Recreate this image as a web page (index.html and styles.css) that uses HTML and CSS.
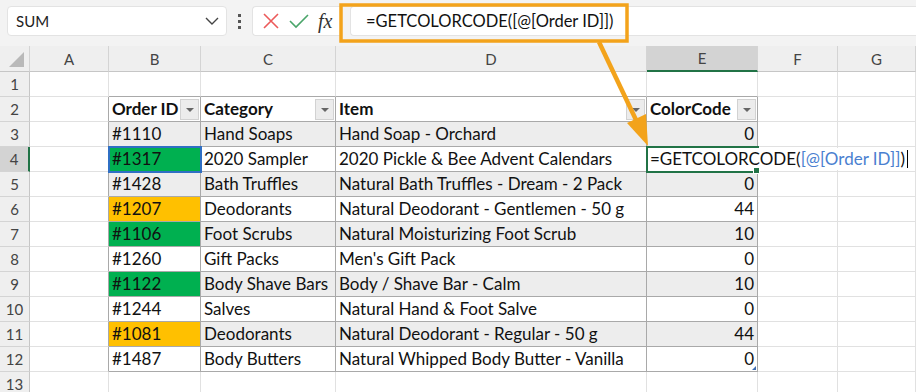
FILE: index.html
```html
<!DOCTYPE html>
<html lang="en">
<head>
  <meta charset="UTF-8">
  <title>GETCOLORCODE</title>
  <link rel="stylesheet" href="styles.css">
</head>
<body>

  <div class="toolbar">
    <div class="namebox">
      <span>SUM</span>
      <svg class="chev" width="14" height="8" viewBox="0 0 14 8"><path d="M1 1 L7 7 L13 1" fill="none" stroke="#444" stroke-width="1.4"/></svg>
    </div>
    <div class="vdots"><i></i><i></i><i></i></div>
    <div class="fxbox">
      <svg width="18" height="18" viewBox="0 0 18 18"><path d="M2 2 L16 16 M16 2 L2 16" stroke="#ec5a5a" stroke-width="1.6" fill="none"/></svg>
      <svg width="20" height="16" viewBox="0 0 20 16"><path d="M1 8 L7 14 L19 2" stroke="#4aa56a" stroke-width="1.6" fill="none"/></svg>
      <span class="fx">fx</span>
    </div>
    <div class="formula">=GETCOLORCODE([@[Order ID]])</div>
  </div>

  <table class="sheet">
    <colgroup>
      <col style="width:30px"><col style="width:79px"><col style="width:92px"><col style="width:135px">
      <col style="width:311px"><col style="width:111px"><col style="width:80px"><col style="width:78px">
    </colgroup>
    <tr class="colhead">
      <th class="corner"><span class="tri"></span></th>
      <th>A</th><th>B</th><th>C</th><th>D</th><th class="sel">E</th><th>F</th><th>G</th>
    </tr>
    <tr class="r1">
      <th class="rh">1</th>
      <td></td><td class="tt"></td><td class="tt"></td><td class="tt"></td><td class="tt"></td><td></td><td></td>
    </tr>
    <tr class="hdr">
      <th class="rh">2</th>
      <td class="tl"></td>
      <td class="t">Order ID<span class="flt"></span></td>
      <td class="t">Category<span class="flt"></span></td>
      <td class="t">Item<span class="flt"></span></td>
      <td class="t">ColorCode<span class="flt"></span></td>
      <td></td><td></td>
    </tr>
    <tr class="band">
      <th class="rh">3</th>
      <td class="tl"></td><td class="t">#1110</td><td class="t">Hand Soaps</td><td class="t">Hand Soap - Orchard</td><td class="t num">0</td><td></td><td></td>
    </tr>
    <tr>
      <th class="rh sel">4</th>
      <td class="tl"></td><td class="t green active">#1317</td><td class="t">2020 Sampler</td><td class="t">2020 Pickle &amp; Bee Advent Calendars</td>
      <td class="t edit"><span class="edittext">=GETCOLORCODE(<b>[@[Order ID]]</b>)<i class="caret"></i></span><span class="handle"></span></td>
      <td></td><td></td>
    </tr>
    <tr class="band">
      <th class="rh">5</th>
      <td class="tl"></td><td class="t">#1428</td><td class="t">Bath Truffles</td><td class="t">Natural Bath Truffles - Dream - 2 Pack</td><td class="t num">0</td><td></td><td></td>
    </tr>
    <tr>
      <th class="rh">6</th>
      <td class="tl"></td><td class="t orange">#1207</td><td class="t">Deodorants</td><td class="t">Natural Deodorant - Gentlemen - 50 g</td><td class="t num">44</td><td></td><td></td>
    </tr>
    <tr class="band">
      <th class="rh">7</th>
      <td class="tl"></td><td class="t green">#1106</td><td class="t">Foot Scrubs</td><td class="t">Natural Moisturizing Foot Scrub</td><td class="t num">10</td><td></td><td></td>
    </tr>
    <tr>
      <th class="rh">8</th>
      <td class="tl"></td><td class="t">#1260</td><td class="t">Gift Packs</td><td class="t">Men's Gift Pack</td><td class="t num">0</td><td></td><td></td>
    </tr>
    <tr class="band">
      <th class="rh">9</th>
      <td class="tl"></td><td class="t green">#1122</td><td class="t">Body Shave Bars</td><td class="t">Body / Shave Bar - Calm</td><td class="t num">10</td><td></td><td></td>
    </tr>
    <tr>
      <th class="rh">10</th>
      <td class="tl"></td><td class="t">#1244</td><td class="t">Salves</td><td class="t">Natural Hand &amp; Foot Salve</td><td class="t num">0</td><td></td><td></td>
    </tr>
    <tr class="band">
      <th class="rh">11</th>
      <td class="tl"></td><td class="t orange">#1081</td><td class="t">Deodorants</td><td class="t">Natural Deodorant - Regular - 50 g</td><td class="t num">44</td><td></td><td></td>
    </tr>
    <tr>
      <th class="rh">12</th>
      <td class="tl"></td><td class="t">#1487</td><td class="t">Body Butters</td><td class="t">Natural Whipped Body Butter - Vanilla</td><td class="t num last">0<span class="resize"></span></td><td></td><td></td>
    </tr>
    <tr>
      <th class="rh">13</th>
      <td></td><td></td><td></td><td></td><td></td><td></td><td></td>
    </tr>
  </table>

  <!-- annotation: orange box round the formula and arrow to E4 -->
  <svg class="callout" width="916" height="392" viewBox="0 0 916 392">
    <rect x="341" y="5" width="286" height="36" fill="none" stroke="#f3a31b" stroke-width="3.5"/>
    <line x1="599" y1="42" x2="637" y2="122" stroke="#f3a31b" stroke-width="4.5"/>
    <polygon points="648,146 627,123 646,114" fill="#f3a31b"/>
  </svg>

</body>
</html>
```

FILE: styles.css
```css
body {
  margin: 0;
  background-color: #ffffff;
  font-family: Lato, "Open Sans", sans-serif;
  overflow: hidden;
}

/* formula bar */
.toolbar {
  display: flex;
  align-items: flex-start;
  height: 46px;
  box-sizing: border-box;
  padding: 6px 0 0 7px;
  background-color: #f3f3f3;
}

.namebox {
  display: flex;
  align-items: center;
  justify-content: space-between;
  width: 220px;
  height: 30px;
  box-sizing: border-box;
  padding: 0 7px 0 8px;
  background-color: #ffffff;
  border: 1px solid #e3e3e3;
  border-radius: 4px;
  font-size: 15px;
  color: #222;
}

.vdots {
  width: 25px;
  height: 30px;
  display: flex;
  flex-direction: column;
  align-items: center;
  justify-content: center;
  gap: 3px;
}

.vdots i {
  display: block;
  width: 3px;
  height: 3px;
  background-color: #555;
}

.fxbox {
  display: flex;
  align-items: center;
  gap: 9px;
  width: 88px;
  height: 30px;
  box-sizing: border-box;
  padding-left: 9px;
  background-color: #ffffff;
  border: 1px solid #e3e3e3;
  border-right: none;
  border-radius: 4px 0 0 4px;
}

.fx {
  font-family: "Liberation Serif", serif;
  font-style: italic;
  font-size: 20px;
  color: #333;
}

.formula {
  flex: 1;
  margin-left: 10px;
  height: 30px;
  box-sizing: border-box;
  padding-left: 15px;
  line-height: 28px;
  background-color: #ffffff;
  border: 1px solid #e3e3e3;
  border-right: none;
  border-radius: 4px 0 0 4px;
  font-size: 16.5px;
  color: #111;
}

/* grid */
.sheet {
  table-layout: fixed;
  width: 916px;
  border-collapse: separate;
  border-spacing: 0;
  font-size: 17px;
  color: #111;
}

.sheet th,
.sheet td {
  height: 24px;
  padding: 0 3px;
  border-right: 1px solid #e1e1e1;
  border-bottom: 1px solid #e1e1e1;
  white-space: nowrap;
  overflow: visible;
  line-height: 24px;
  text-align: left;
}

.colhead th {
  background-color: #efefef;
  border-right-color: #d4d4d4;
  border-bottom-color: #c6c6c6;
  text-align: center;
  font-weight: normal;
  font-size: 15px;
  color: #444;
}

.colhead th.sel {
  background-color: #d3d3d3;
  border-bottom: 2px solid #217346;
  height: 23px;
}

.corner {
  position: relative;
}

.tri {
  position: absolute;
  right: 5px;
  bottom: 4px;
  width: 0;
  height: 0;
  border-left: 15px solid transparent;
  border-bottom: 15px solid #b9b9b9;
}

.sheet .rh {
  background-color: #efefef;
  border-right-color: #c6c6c6;
  border-bottom-color: #d4d4d4;
  text-align: center;
  font-weight: normal;
  font-size: 15px;
  color: #444;
}

.sheet .rh.sel {
  background-color: #d3d3d3;
  border-right: 2px solid #217346;
}

.r1 td,
.r1 th {
  height: 23px;
}

/* excel table B2:E12 */
.sheet td.t {
  border-right-color: #a9a9a9;
  border-bottom-color: #a9a9a9;
}

.sheet td.tl {
  border-right-color: #a9a9a9;
}

.sheet td.tt {
  border-bottom-color: #a9a9a9;
}

.band td.t {
  background-color: #ededed;
}

.hdr td.t {
  font-weight: bold;
  position: relative;
}

.flt {
  position: absolute;
  right: 1px;
  top: 2px;
  width: 19px;
  height: 21px;
  box-sizing: border-box;
  background-color: #ececec;
  border: 1px solid #d2d2d2;
}

.flt::after {
  content: "";
  position: absolute;
  left: 5px;
  top: 8px;
  border-left: 4px solid transparent;
  border-right: 4px solid transparent;
  border-top: 4px solid #666;
}

.sheet td.green,
.band td.green {
  background-color: #00b050;
}

.sheet td.orange,
.band td.orange {
  background-color: #ffc000;
}

.active {
  outline: 2px solid #2f6fc4;
  outline-offset: -1px;
}

.num {
  text-align: right !important;
}

.edit {
  position: relative;
  outline: 2px solid #217346;
  outline-offset: -1px;
}

.edittext {
  position: absolute;
  left: 3px;
  top: 1px;
  height: 22px;
  padding-right: 4px;
  line-height: 22px;
  background-color: #ffffff;
  z-index: 1;
}

.edittext b {
  font-weight: normal;
  color: #4a7fd0;
}

.caret {
  display: inline-block;
  width: 1px;
  height: 18px;
  margin-left: 2px;
  vertical-align: -3px;
  background-color: #000;
}

.handle {
  position: absolute;
  right: -3px;
  bottom: -3px;
  width: 5px;
  height: 5px;
  background-color: #217346;
  border: 1px solid #fff;
  z-index: 2;
}

.last {
  position: relative;
}

.resize {
  position: absolute;
  right: 1px;
  bottom: 1px;
  width: 0;
  height: 0;
  border-left: 4px solid transparent;
  border-bottom: 4px solid #3d6cb3;
}

.callout {
  position: absolute;
  top: 0;
  left: 0;
  pointer-events: none;
}
```
